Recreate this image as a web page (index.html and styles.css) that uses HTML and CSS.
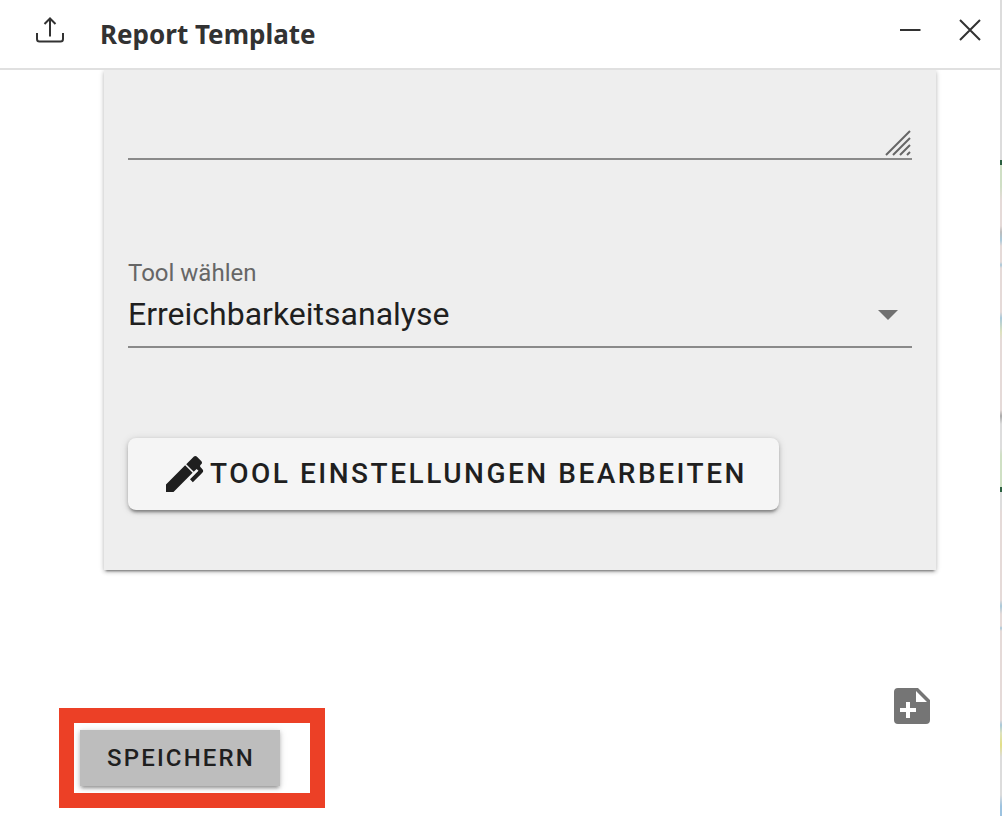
FILE: index.html
```html
<!DOCTYPE html>
<html lang="de">
<head>
<meta charset="utf-8">
<meta name="viewport" content="width=device-width, initial-scale=1">
<title>Report Template</title>
<link rel="stylesheet" href="styles.css">
</head>
<body>
<div class="window">
  <header class="header">
    <svg class="header-icon" viewBox="0 0 32 32" aria-hidden="true"><path d="M16 22.500V5M10.500 10L16 4.500l5.500 5.500M3 19V25a2.500 2.500 0 0 0 2.500 2.500h21a2.500 2.500 0 0 0 2.500-2.500v-6"/></svg>
    <h1 class="title">Report Template</h1>
    <button class="header-button" type="button" aria-label="Minimieren"><svg class="header-icon" viewBox="0 0 32 32"><path d="M6 16H26.500"/></svg></button>
    <button class="header-button" type="button" aria-label="Schließen"><svg class="header-icon" viewBox="0 0 32 32"><path d="M6 6L26 26M26 6L6 26"/></svg></button>
  </header>
  <main class="content">
    <form class="card" id="template-form">
      <div class="area">
        <textarea class="area-input" aria-label="Beschreibung"></textarea>
        <svg class="grip" viewBox="0 0 26 26" aria-hidden="true"><path d="M1 25L25 1M8 25L25 8M15 25l10-10M22 25l3-3"/></svg>
      </div>
      <div class="field">
        <label class="label" for="tool">Tool wählen</label>
        <div class="select-box">
          <select class="select" id="tool"><option>Erreichbarkeitsanalyse</option></select>
          <svg class="arrow" viewBox="0 0 20 10" aria-hidden="true"><path d="M0 0h20L10 10z"/></svg>
        </div>
      </div>
      <button class="edit" type="button">
        <svg class="icon" viewBox="0 0 24 24" aria-hidden="true"><path d="M20.710,7.040C20.370,7.380 20.040,7.710 20.030,8.040C20,8.360 20.340,8.690 20.660,9C21.140,9.500 21.610,9.950 21.590,10.440C21.570,10.930 21.060,11.440 20.550,11.940L16.420,16.080L15,14.660L19.250,10.420L18.290,9.460L16.870,10.870L13.120,7.120L16.960,3.290C17.350,2.900 18,2.900 18.370,3.290L20.710,5.630C21.100,6 21.100,6.650 20.710,7.040M3,17.250L12.560,7.680L16.310,11.430L6.750,21H3V17.250Z"/></svg>
        <span>Tool Einstellungen bearbeiten</span>
      </button>
    </form>
    <div class="actions">
      <div class="highlight"><button class="save" type="submit" form="template-form">Speichern</button></div>
      <button class="add" type="button" aria-label="Hinzufügen"><svg class="icon" viewBox="0 0 24 24"><path fill-rule="evenodd" d="M5 3H15L21 9V19a2 2 0 0 1-2 2H5a2 2 0 0 1-2-2V5a2 2 0 0 1 2-2ZM14 4.500V10H19.500ZM9 10V13H6V15H9V18H11V15H14V13H11V10Z"/></svg></button>
    </div>
  </main>
</div>
<div class="map"></div>
</body>
</html>
```
FILE: styles.css
```css
* {
  box-sizing: border-box;
}

body {
  margin: 0;
  min-height: 100vh;
  display: grid;
  grid-template-columns: 1fr 2px;
  background: #fff;
  color: #1f1f1f;
  font-family: Roboto, sans-serif;
}

button {
  border: 0;
  padding: 0;
  background: none;
  color: inherit;
  font-family: inherit;
  cursor: pointer;
}

svg {
  display: block;
}

.window {
  display: flex;
  flex-direction: column;
}

.header {
  display: flex;
  align-items: center;
  gap: 28px;
  padding: 0 14px 8px 34px;
  height: 70px;
  border-bottom: 2px solid #e0e0e0;
}

.header-icon {
  width: 32px;
  height: 32px;
  fill: none;
  stroke: #323232;
  stroke-width: 2;
}

.title {
  flex: 1;
  margin: 0;
  padding: 8px 0 0 6px;
  color: #323232;
  font: bold 26px/36px "Noto Sans", sans-serif;
}

.content {
  overflow: hidden;
}

.card {
  margin: 0 64px 0 104px;
  padding: 0 24px 60px;
  background: #eee;
  box-shadow: 0 3px 2px -2px rgba(0, 0, 0, 0.4), 0 2px 4px rgba(0, 0, 0, 0.2), 0 1px 6px rgba(0, 0, 0, 0.12);
}

.area {
  position: relative;
}

.area-input {
  display: block;
  width: 100%;
  height: 90px;
  border: 0;
  border-bottom: 2px solid #8a8a8a;
  background: none;
  resize: none;
  font: 32px/40px Roboto, sans-serif;
}

.grip {
  position: absolute;
  right: 1px;
  bottom: 4px;
  width: 26px;
  height: 26px;
  fill: none;
  stroke: #666;
  stroke-width: 2;
}

.field {
  margin: 97px 0 90px;
}

.label {
  display: block;
  color: #666;
  font-size: 24px;
  line-height: 32px;
}

.select-box {
  position: relative;
}

.select {
  display: block;
  width: 100%;
  height: 59px;
  padding: 0 0 7px;
  border: 0;
  border-bottom: 2px solid #8a8a8a;
  border-radius: 0;
  appearance: none;
  background: none;
  color: #1f1f1f;
  font: 32px/40px Roboto, sans-serif;
}

.arrow {
  position: absolute;
  right: 14px;
  top: 21px;
  width: 20px;
  height: 10px;
  fill: #707070;
  pointer-events: none;
}

.edit,
.save {
  font-weight: 500;
  letter-spacing: 0.09em;
  text-transform: uppercase;
}

.edit {
  display: flex;
  align-items: center;
  height: 72px;
  padding: 0 32px;
  border-radius: 8px;
  background: #f5f5f5;
  box-shadow: 0 4px 3px -2px rgba(0, 0, 0, 0.3), 0 2px 4px rgba(0, 0, 0, 0.2), 0 1px 8px rgba(0, 0, 0, 0.12);
  font-size: 28px;
  white-space: nowrap;
}

.icon {
  width: 48px;
  height: 48px;
  fill: currentColor;
}

.edit span {
  padding: 0 0 2px 2px;
}

.actions {
  display: flex;
  justify-content: space-between;
  align-items: flex-start;
  padding: 112px 64px 8px 59px;
}

.highlight {
  margin-top: 26px;
  padding: 7px 30px 7px 6px;
  border: 15px solid #ec4026;
}

.save {
  display: block;
  height: 56px;
  padding: 0 25px 0 27px;
  background: #bdbdbd;
  box-shadow: 0 4px 3px -2px rgba(0, 0, 0, 0.2), 0 2px 4px rgba(0, 0, 0, 0.2), 0 1px 8px rgba(0, 0, 0, 0.12);
  font-size: 24px;
}

.add {
  color: #757575;
}

.map {
  background: linear-gradient(#dcdcdc 160px, #2b6040 160px 165px, #cfdfc5 165px 186px, #e5dad8 200px 226px, #bcbcbc 232px, #a9c9da 240px, #e5dad8 246px 262px, #a9c9da 265px, #e5dad8 268px 312px, #a9c9da 318px, #dde2bd 332px, #e5dad8 340px 410px, #aaa 416px, #ddd 424px 448px, #cfe0c4 455px 487px, #2b6040 487px 492px, #ddd 492px 508px, #e5dad8 512px 600px, #a9c9da 606px, #e5dad8 614px 626px, #a9c9da 628px, #e5dad8 631px 720px, #a9c9da 725px, #dde2bd 733px, #e2df86 745px, #dcdcdc 757px 795px, #9dc3e0 806px);
}
```
